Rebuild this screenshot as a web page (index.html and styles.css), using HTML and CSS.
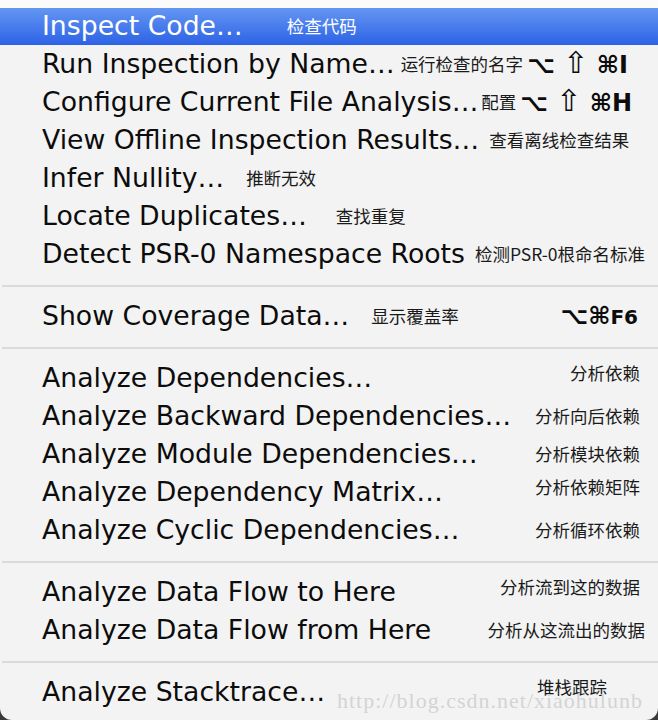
FILE: index.html
```html
<!DOCTYPE html>
<html lang="zh-CN">
<head>
  <meta charset="UTF-8" />
  <title>Analyze Menu</title>
  <link rel="stylesheet" href="styles.css">
</head>
<body>

  <div class="menu">
    <div class="item active">
      <span class="label">Inspect Code…</span>
      <span class="note gap-xl">检查代码</span>
    </div>
    <div class="item">
      <span class="label">Run Inspection by Name…</span>
      <span class="note gap-xs">运行检查的名字</span>
      <span class="keys">⌥ <i>⇧</i> ⌘I</span>
    </div>
    <div class="item">
      <span class="label">Configure Current File Analysis…</span>
      <span class="note gap-xxs">配置</span>
      <span class="keys">⌥ <i>⇧</i> ⌘H</span>
    </div>
    <div class="item">
      <span class="label">View Offline Inspection Results…</span>
      <span class="note gap-s">查看离线检查结果</span>
    </div>
    <div class="item">
      <span class="label">Infer Nullity…</span>
      <span class="note gap-m">推断无效</span>
    </div>
    <div class="item">
      <span class="label">Locate Duplicates…</span>
      <span class="note gap-l">查找重复</span>
    </div>
    <div class="item">
      <span class="label">Detect PSR-0 Namespace Roots</span>
      <span class="note gap-s">检测PSR-0根命名标准</span>
    </div>

    <div class="separator"></div>

    <div class="item">
      <span class="label">Show Coverage Data…</span>
      <span class="note gap-m">显示覆盖率</span>
      <span class="keys right">⌥⌘<b>F6</b></span>
    </div>

    <div class="separator"></div>

    <div class="item">
      <span class="label">Analyze Dependencies…</span>
      <span class="note right raised">分析依赖</span>
    </div>
    <div class="item">
      <span class="label">Analyze Backward Dependencies…</span>
      <span class="note right">分析向后依赖</span>
    </div>
    <div class="item">
      <span class="label">Analyze Module Dependencies…</span>
      <span class="note right">分析模块依赖</span>
    </div>
    <div class="item">
      <span class="label">Analyze Dependency Matrix…</span>
      <span class="note right raised">分析依赖矩阵</span>
    </div>
    <div class="item">
      <span class="label">Analyze Cyclic Dependencies…</span>
      <span class="note right">分析循环依赖</span>
    </div>

    <div class="separator"></div>

    <div class="item">
      <span class="label">Analyze Data Flow to Here</span>
      <span class="note right raised">分析流到这的数据</span>
    </div>
    <div class="item">
      <span class="label">Analyze Data Flow from Here</span>
      <span class="note right wide">分析从这流出的数据</span>
    </div>

    <div class="separator"></div>

    <div class="item">
      <span class="label">Analyze Stacktrace…</span>
      <span class="note right inset raised">堆栈跟踪</span>
    </div>

    <div class="watermark">http://blog.csdn.net/xiaohulunb</div>
  </div>

</body>
</html>
```

FILE: styles.css
```css
* {
  margin: 0;
  padding: 0;
  box-sizing: border-box;
}

html, body {
  height: 100%;
}

body {
  background: #3a3a3a;
  font-family: "DejaVu Sans", "Noto Sans CJK SC", sans-serif;
  color: #0c0c0c;
}

.menu {
  position: relative;
  height: 720px;
  background: #f3f3f3;
  border-top: 8px solid #fbfbfb;
  border-radius: 0 0 12px 12px;
  overflow: hidden;
}

.item {
  display: flex;
  align-items: center;
  height: 38px;
  padding: 0 18px 3px 42px;
  white-space: nowrap;
}

.item.active {
  height: 37px;
  margin-bottom: 1px;
  background: linear-gradient(#6496f2, #2d62e6);
  color: #fff;
}

.label {
  font-size: 26.7px;
}

.note {
  font-family: "Noto Sans CJK SC", sans-serif;
  font-size: 17.5px;
  color: #1a1a1a;
  margin-left: 8px;
}

.active .note {
  color: #fff;
}

.gap-xxs { margin-left: 3px; }
.gap-xs { margin-left: 6px; }
.gap-s { margin-left: 10px; }
.gap-m { margin-left: 22px; }
.gap-l { margin-left: 29px; }
.gap-xl { margin-left: 44px; }

.note.right {
  margin-left: auto;
}

.note.wide {
  margin-right: -5px;
}

.note.inset {
  margin-right: 33px;
}

.note.raised {
  margin-top: -11px;
}

.keys {
  font-family: "DejaVu Sans", sans-serif;
  font-size: 24px;
  font-weight: bold;
  margin-left: 4px;
}

.keys i {
  font-style: normal;
  font-weight: normal;
  font-size: 30px;
  line-height: 1;
}

.keys.right {
  margin-left: auto;
  padding-right: 2px;
}

.keys b {
  font-size: 20px;
}

.separator {
  height: 2px;
  margin: 11px 0 11px 2px;
  background: #dadada;
}

.watermark {
  position: absolute;
  left: 337px;
  top: 680px;
  font-family: "Liberation Serif", serif;
  font-size: 22px;
  letter-spacing: 1px;
  color: #d4d4d4;
  pointer-events: none;
}
```
